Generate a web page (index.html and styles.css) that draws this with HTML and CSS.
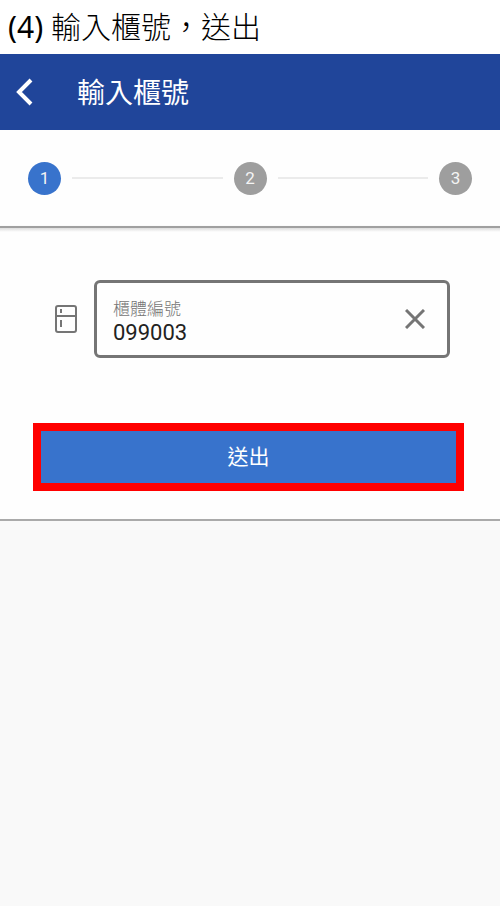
FILE: index.html
```html
<!DOCTYPE html>
<html lang="zh-Hant">
<head>
  <meta charset="UTF-8">
  <meta name="viewport" content="width=device-width, initial-scale=1.0">
  <title>輸入櫃號</title>
  <link rel="stylesheet" href="styles.css">
</head>
<body>
  <h1 class="guide-title"><span class="number">(4)</span> 輸入櫃號，送出</h1>

  <header class="app-bar">
    <button class="back" type="button" aria-label="返回">
      <svg width="18" height="28" viewBox="0 0 18 28"><path d="M15 2L3 14l12 12" fill="none" stroke="currentColor" stroke-width="4"/></svg>
    </button>
    <h2 class="app-title">輸入櫃號</h2>
  </header>

  <ol class="stepper">
    <li class="step active">1</li>
    <li class="line" role="presentation"></li>
    <li class="step">2</li>
    <li class="line" role="presentation"></li>
    <li class="step">3</li>
  </ol>

  <form action="" class="locker-form">
    <div class="field-row">
      <svg class="locker-icon" width="24" height="28" viewBox="0 0 24 28" fill="none" stroke="currentColor">
        <rect x="2" y="1" width="20" height="26" rx="2" stroke-width="2"/>
        <path d="M2 11h20" stroke-width="2"/>
        <path d="M7 4v4M7 15v7" stroke-width="2"/>
      </svg>
      <div class="field">
        <div class="field-text">
          <label for="locker">櫃體編號</label>
          <input id="locker" type="text" value="099003">
        </div>
        <button class="clear" type="button" aria-label="清除">
          <svg width="20" height="20" viewBox="0 0 20 20"><path d="M1 1l18 18M19 1L1 19" fill="none" stroke="currentColor" stroke-width="3"/></svg>
        </button>
      </div>
    </div>
    <button class="submit" type="submit">送出</button>
  </form>
</body>
</html>
```
FILE: styles.css
```css
*{
  padding: 0;
  margin: 0;
  box-sizing: border-box;
}
body{
  background-color: #f9f9f9;
  font-family: Roboto, "Noto Sans CJK TC", sans-serif;
}
button{
  border: none;
  background: none;
  color: inherit;
  font-family: inherit;
  cursor: pointer;
}
svg{
  display: block;
}
.guide-title{
  height: 54px;
  padding: 0 8px;
  background-color: white;
  font-family: "Noto Sans", "Noto Sans CJK TC", sans-serif;
  font-size: 30px;
  font-weight: 300;
  line-height: 54px;
}
.guide-title .number{
  font-weight: 400;
}
.app-bar{
  display: flex;
  align-items: center;
  gap: 43px;
  height: 76px;
  padding: 0 16px;
  background-color: #20459a;
  color: white;
}
.app-title{
  padding-top: 4px;
  font-size: 28px;
  font-weight: 400;
  line-height: 40px;
}
.stepper{
  display: flex;
  align-items: center;
  gap: 11px;
  height: 96px;
  padding: 0 28px;
  background-color: #fefefe;
  list-style: none;
}
.step{
  width: 33px;
  height: 33px;
  border-radius: 50%;
  background-color: #9e9e9e;
  color: #f4f4f4;
  font-size: 17px;
  line-height: 33px;
  text-align: center;
}
.step.active{
  background-color: #3873cc;
}
.line{
  flex: 1;
  height: 2px;
  background-color: #ebebeb;
}
.locker-form{
  padding: 52px 36px 28px 33px;
  border-top: 2px solid #a0a0a0;
  border-bottom: 2px solid #aaa;
  background: linear-gradient(#ddd, #fefefe 4px);
  box-shadow: 0 1px 2px #ccc;
}
.field-row{
  display: flex;
  align-items: center;
  gap: 16px;
  padding: 0 14px 0 21px;
  color: #757575;
}
.locker-icon{
  flex: none;
}
.field{
  display: flex;
  align-items: center;
  flex: 1;
  height: 78px;
  padding: 0 22px 0 16px;
  border: 3px solid #757575;
  border-radius: 6px;
}
.field-text{
  flex: 1;
  min-width: 0;
  padding-top: 8px;
}
.field-text label{
  display: block;
  font-size: 17px;
  font-weight: 300;
  line-height: 20px;
}
.field-text input{
  display: block;
  width: 100%;
  border: none;
  outline: none;
  background: none;
  color: #222;
  font-family: inherit;
  font-size: 22px;
  line-height: 28px;
}
.submit{
  display: block;
  width: 100%;
  height: 68px;
  padding-bottom: 4px;
  margin-top: 65px;
  border: 8px solid red;
  background-color: #3873cc;
  color: white;
  font-size: 21px;
}
```
